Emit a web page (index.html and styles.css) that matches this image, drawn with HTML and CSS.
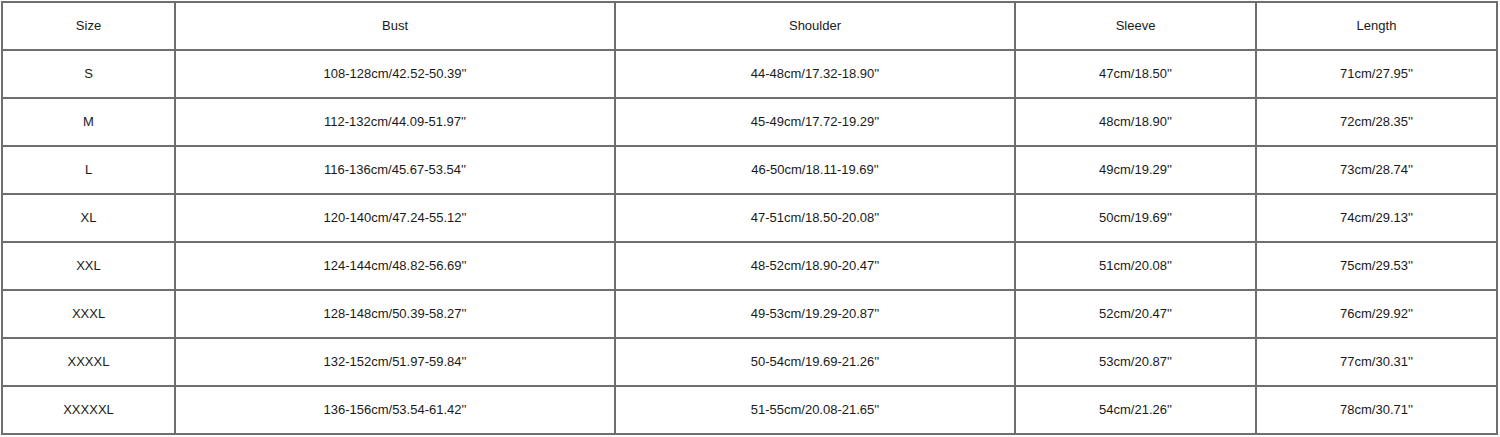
FILE: index.html
```html
<!DOCTYPE html>
<html>
<head>
<meta charset="utf-8">
<link rel="stylesheet" href="styles.css">
</head>
<body>
<table class="chart">
  <colgroup>
    <col class="c-size"><col class="c-bust"><col class="c-shoulder"><col class="c-sleeve"><col class="c-length">
  </colgroup>
  <tr><td>Size</td><td>Bust</td><td>Shoulder</td><td>Sleeve</td><td>Length</td></tr>
  <tr><td>S</td><td>108-128cm/42.52-50.39''</td><td>44-48cm/17.32-18.90''</td><td>47cm/18.50''</td><td>71cm/27.95''</td></tr>
  <tr><td>M</td><td>112-132cm/44.09-51.97''</td><td>45-49cm/17.72-19.29''</td><td>48cm/18.90''</td><td>72cm/28.35''</td></tr>
  <tr><td>L</td><td>116-136cm/45.67-53.54''</td><td>46-50cm/18.11-19.69''</td><td>49cm/19.29''</td><td>73cm/28.74''</td></tr>
  <tr><td>XL</td><td>120-140cm/47.24-55.12''</td><td>47-51cm/18.50-20.08''</td><td>50cm/19.69''</td><td>74cm/29.13''</td></tr>
  <tr><td>XXL</td><td>124-144cm/48.82-56.69''</td><td>48-52cm/18.90-20.47''</td><td>51cm/20.08''</td><td>75cm/29.53''</td></tr>
  <tr><td>XXXL</td><td>128-148cm/50.39-58.27''</td><td>49-53cm/19.29-20.87''</td><td>52cm/20.47''</td><td>76cm/29.92''</td></tr>
  <tr><td>XXXXL</td><td>132-152cm/51.97-59.84''</td><td>50-54cm/19.69-21.26''</td><td>53cm/20.87''</td><td>77cm/30.31''</td></tr>
  <tr><td>XXXXXL</td><td>136-156cm/53.54-61.42''</td><td>51-55cm/20.08-21.65''</td><td>54cm/21.26''</td><td>78cm/30.71''</td></tr>
</table>
</body>
</html>
```
FILE: styles.css
```css
html, body {
  margin: 0;
  padding: 0;
  background: #ffffff;
}
body {
  padding: 1px 0 0 1px;
  font-family: "Liberation Sans", Arial, sans-serif;
  font-size: 13px;
  color: #1a1a1a;
}
.chart {
  border-collapse: collapse;
  table-layout: fixed;
  width: 1495px;
}
.chart td {
  border: 2px solid #6e6e6e;
  height: 44px;
  padding: 0 0 2px 0;
  text-align: center;
  vertical-align: middle;
}
.c-size { width: 173px; }
.c-bust { width: 440px; }
.c-shoulder { width: 400px; }
.c-sleeve { width: 241px; }
.c-length { width: 241px; }
```
